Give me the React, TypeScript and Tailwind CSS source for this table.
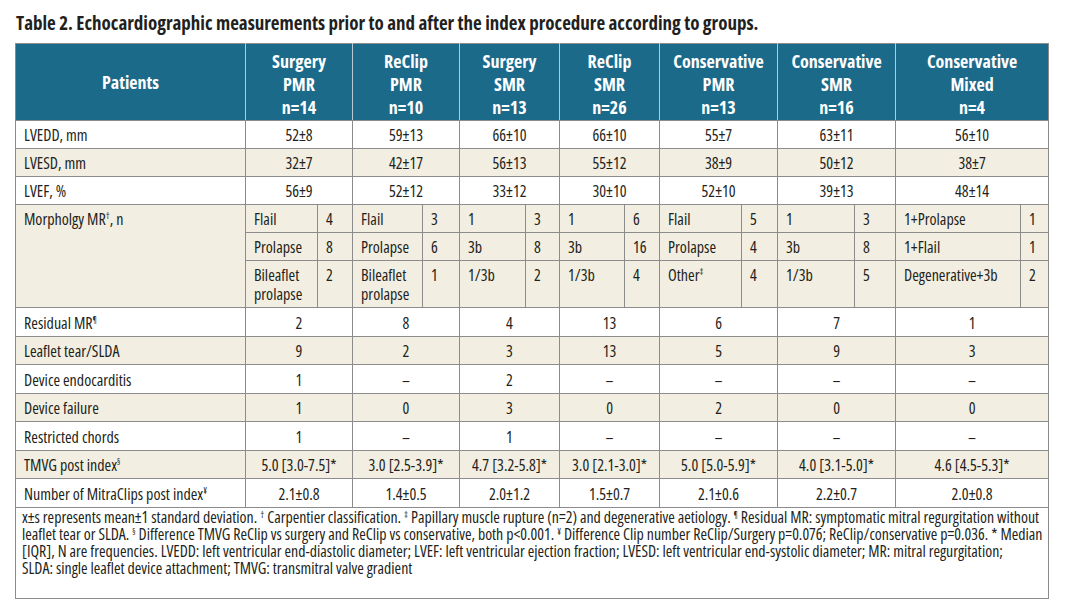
import React from "react";

const cols = [230, 72, 35, 70, 37, 66, 34, 65, 35, 82, 36, 77, 41, 125, 28];

type Row = { label: React.ReactNode; vals: string[]; shade: boolean };

const Sup = ({ children }: { children: React.ReactNode }) => (
  <span className="align-top text-[9px] leading-[12px]">{children}</span>
);

const rowsTop: Row[] = [
  { label: "LVEDD, mm", vals: ["52±8", "59±13", "66±10", "66±10", "55±7", "63±11", "56±10"], shade: false },
  { label: "LVESD, mm", vals: ["32±7", "42±17", "56±13", "55±12", "38±9", "50±12", "38±7"], shade: true },
  { label: "LVEF, %", vals: ["56±9", "52±12", "33±12", "30±10", "52±10", "39±13", "48±14"], shade: false },
];

const rowsBottom: Row[] = [
  { label: <>Residual MR<Sup>¶</Sup></>, vals: ["2", "8", "4", "13", "6", "7", "1"], shade: false },
  { label: "Leaflet tear/SLDA", vals: ["9", "2", "3", "13", "5", "9", "3"], shade: true },
  { label: "Device endocarditis", vals: ["1", "–", "2", "–", "–", "–", "–"], shade: false },
  { label: "Device failure", vals: ["1", "0", "3", "0", "2", "0", "0"], shade: true },
  { label: "Restricted chords", vals: ["1", "–", "1", "–", "–", "–", "–"], shade: false },
  {
    label: <>TMVG post index<Sup>§</Sup></>,
    vals: ["5.0 [3.0-7.5]*", "3.0 [2.5-3.9]*", "4.7 [3.2-5.8]*", "3.0 [2.1-3.0]*", "5.0 [5.0-5.9]*", "4.0 [3.1-5.0]*", "4.6 [4.5-5.3]*"],
    shade: true,
  },
  {
    label: <>Number of MitraClips post index<Sup>¥</Sup></>,
    vals: ["2.1±0.8", "1.4±0.5", "2.0±1.2", "1.5±0.7", "2.1±0.6", "2.2±0.7", "2.0±0.8"],
    shade: false,
  },
];

const morph: [React.ReactNode, string][][] = [
  [["Flail", "4"], ["Flail", "3"], ["1", "3"], ["1", "6"], ["Flail", "5"], ["1", "3"], ["1+Prolapse", "1"]],
  [["Prolapse", "8"], ["Prolapse", "6"], ["3b", "8"], ["3b", "16"], ["Prolapse", "4"], ["3b", "8"], ["1+Flail", "1"]],
  [
    ["Bileaflet prolapse", "2"],
    ["Bileaflet prolapse", "1"],
    ["1/3b", "2"],
    ["1/3b", "4"],
    [<>Other<Sup>‡</Sup></>, "4"],
    ["1/3b", "5"],
    ["Degenerative+3b", "2"],
  ],
];

const headers = [
  ["Surgery", "PMR", "n=14"],
  ["ReClip", "PMR", "n=10"],
  ["Surgery", "SMR", "n=13"],
  ["ReClip", "SMR", "n=26"],
  ["Conservative", "PMR", "n=13"],
  ["Conservative", "SMR", "n=16"],
  ["Conservative", "Mixed", "n=4"],
];

const cell = "border border-[#8c8c8c] px-2 pt-[5px] pb-[3px] leading-[19px] align-top";
const cellB = "border border-[#8c8c8c] px-2 pt-[5.5px] pb-[3px] leading-[19px] align-top";

export default function App() {
  return (
    <div className="w-[1072px] h-[611px] bg-white text-[#231f20] font-['Open_Sans',sans-serif] [font-stretch:75%]">
      <div className="pl-[16px] pt-[12px] h-[43px] text-[19px] font-bold leading-[22px]">
        Table 2. Echocardiographic measurements prior to and after the index procedure according to groups.
      </div>
      <table className="ml-[15px] w-[1033px] table-fixed border-collapse text-[16px]">
        <colgroup>
          {cols.map((w, i) => (
            <col key={i} style={{ width: w }} />
          ))}
        </colgroup>
        <thead>
          <tr className="bg-[#1c6a8a] text-white font-bold text-[18px]">
            <th className="border border-[#8c8c8c] border-r-[#b8c9d1] h-[77px] text-center align-middle">Patients</th>
            {headers.map((h, i) => (
              <th
                key={i}
                colSpan={2}
                className={
                  i < 6
                    ? "border border-[#8c8c8c] border-r-[#b8c9d1] text-center align-middle leading-[23px] pt-[5px]"
                    : "border border-[#8c8c8c] text-center align-middle leading-[23px] pt-[5px]"
                }
              >
                {h.map((l, j) => (
                  <div key={j}>{l}</div>
                ))}
              </th>
            ))}
          </tr>
        </thead>
        <tbody>
          {rowsTop.map((r, i) => (
            <tr key={i} className={r.shade ? "bg-[#f2eee1]" : "bg-white"}>
              <td className={cell}>{r.label}</td>
              {r.vals.map((v, j) => (
                <td key={j} colSpan={2} className={`${cell} text-center`}>
                  {v}
                </td>
              ))}
            </tr>
          ))}
          {morph.map((sub, i) => (
            <tr key={"m" + i} className="bg-[#f2eee1]">
              {i === 0 && (
                <td rowSpan={3} className={cell}>
                  Morpholgy MR<Sup>†</Sup>, n
                </td>
              )}
              {sub.map(([a, b], j) => (
                <React.Fragment key={j}>
                  <td className={cell}>{a}</td>
                  <td className={cell}>{b}</td>
                </React.Fragment>
              ))}
            </tr>
          ))}
          {rowsBottom.map((r, i) => (
            <tr key={"b" + i} className={r.shade ? "bg-[#f2eee1]" : "bg-white"}>
              <td className={cellB}>{r.label}</td>
              {r.vals.map((v, j) => (
                <td key={j} colSpan={2} className={`${cellB} text-center`}>
                  {v}
                </td>
              ))}
            </tr>
          ))}
          <tr className="bg-white">
            <td
              colSpan={15}
              className="border border-[#8c8c8c] px-[6px] pt-[1px] pb-[21px] text-[15.85px] leading-[17px] whitespace-nowrap"
            >
              x±s represents mean±1 standard deviation. <Sup>†</Sup> Carpentier classification. <Sup>‡</Sup> Papillary muscle
              rupture (n=2) and degenerative aetiology. <Sup>¶</Sup> Residual MR: symptomatic mitral regurgitation without
              <br />
              leaflet tear or SLDA. <Sup>§</Sup> Difference TMVG ReClip vs surgery and ReClip vs conservative, both p&lt;0.001.{" "}
              <Sup>¥</Sup> Difference Clip number ReClip/Surgery p=0.076; ReClip/conservative p=0.036. * Median
              <br />
              [IQR], N are frequencies. LVEDD: left ventricular end-diastolic diameter; LVEF: left ventricular ejection fraction;
              LVESD: left ventricular end-systolic diameter; MR: mitral regurgitation;
              <br />
              SLDA: single leaflet device attachment; TMVG: transmitral valve gradient
            </td>
          </tr>
        </tbody>
      </table>
    </div>
  );
}
